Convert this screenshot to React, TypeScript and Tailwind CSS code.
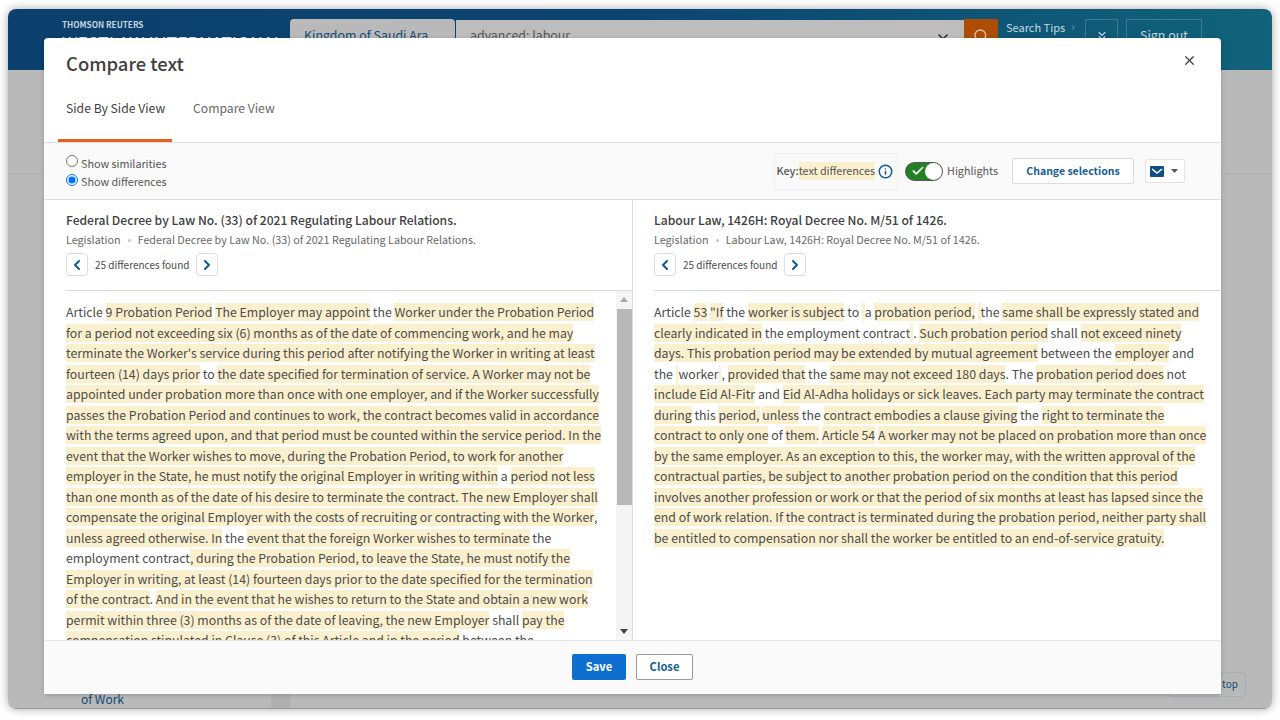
import React from 'react';
import { X, Info, Search, ChevronDown, ChevronsDown, ChevronLeft, ChevronRight, Check } from 'lucide-react';

// a string is plain text, [string] is a highlighted difference
type Seg = string | [string];

const leftLines: Seg[][] = [
  ['Article ', ['9 Probation Period'], ' ', ['The Employer may appoint'], ' the ', ['Worker under the Probation Period']],
  [['for a period not exceeding six (6) months as of the date of commencing work, and he may']],
  [["terminate the Worker's service during this period after notifying the Worker in writing at least"]],
  [['fourteen (14) days prior'], ' to ', ['the date specified for termination of service. A Worker may not be']],
  [['appointed under probation more than once with one employer, and if the Worker successfully']],
  [['passes the Probation Period and continues to work, the contract becomes valid in accordance']],
  [['with the terms agreed upon, and that period must be counted within the service period. In the']],
  [['event that the Worker wishes to move, during the Probation Period, to work for another']],
  [['employer in the State, he must notify the original Employer in writing within'], ' a ', ['period not less']],
  [['than one month as of the date of his desire to terminate the contract. The new Employer shall']],
  [['compensate the original Employer with the costs of recruiting or contracting with the Worker'], ','],
  [['unless agreed otherwise. In'], ' the ', ['event that the foreign Worker wishes to terminate'], ' the'],
  ['employment contract', [', during the Probation Period, to leave the State, he must notify the']],
  [['Employer in writing, at least (14) fourteen days prior to the date specified for the termination']],
  [['of the contract'], '. ', ['And in the event that he wishes to return to the State and obtain a new work']],
  [['permit within three (3) months as of the date of leaving, the new Employer'], ' shall ', ['pay the']],
  [['compensation stipulated in Clause (3) of this Article and in the period'], ' between the'],
];

const rightLines: Seg[][] = [
  ['Article ', ['53'], ' ', ['"If'], ' the ', ['worker is subject'], ' to ', [' '], 'a ', ['probation period,'], ' ', [' '], 'the ', ['same shall be expressly stated and']],
  [['clearly indicated in'], ' the employment contract', [' '], '. ', ['Such probation period'], ' shall ', ['not exceed ninety']],
  [['days. This probation period may be extended by mutual agreement'], ' between the ', ['employer'], ' and'],
  ['the ', [' '], 'worker', [' '], ', ', ['provided that'], ' the ', ['same may not exceed 180 days'], '. The ', ['probation period does'], ' not'],
  [['include Eid Al-Fitr'], ' and ', ['Eid Al-Adha holidays or sick leaves. Each party may terminate the contract']],
  [['during'], ' this ', ['period,'], ' ', ['unless'], ' the ', ['contract embodies a clause giving'], ' the ', ['right to terminate the']],
  [['contract to only one'], ' of ', ['them.'], ' ', ['Article 54'], ' ', ['A worker may not be placed on probation more than once']],
  [['by the same employer. As an exception to this, the worker may, with the written approval of the']],
  [['contractual parties, be subject to another probation period on the condition that this period']],
  [['involves another profession or work or that the period of six months at least has lapsed since the']],
  [['end of work relation. If the contract is terminated during the probation period, neither party shall']],
  [['be entitled to compensation nor shall the worker be entitled to an end-of-service gratuity.']],
];

const DocText = ({ lines }: { lines: Seg[][] }) => (
  <div className="text-[12.3px] leading-[20.53px] text-[#4b4b4b] whitespace-pre">
    {lines.map((line, i) => (
      <div key={i} className="h-[20.53px]">
        {line.map((seg, j) =>
          typeof seg === 'string' ? (
            <span key={j}>{seg}</span>
          ) : (
            <span key={j} className="inline-block h-[18px] leading-[18px] bg-[#fbf0cd]">{seg[0]}</span>
          )
        )}
      </div>
    ))}
  </div>
);

const DocHeader = ({ title }: { title: string }) => (
  <div className="h-[91px] shrink-0 border-b border-[#dcdcdc] pt-[11px]">
    <div className="text-[12.1px] leading-[18px] font-medium text-[#404040]">{title}</div>
    <div className="mt-[3px] flex items-center text-[10.75px] leading-[16px] text-[#686868]">
      <span>Legislation</span>
      <span className="mx-[7px] h-[3px] w-[3px] rounded-full bg-[#c4c4c4]" />
      <span>{title}</span>
    </div>
    <div className="mt-[5px] flex items-center gap-[7px] text-[10px] text-[#4b4b4b]">
      <button className="flex h-[23px] w-[22px] items-center justify-center rounded-sm border border-[#dcdcdc] bg-white text-[#0f5a94]">
        <ChevronLeft size={16} strokeWidth={3} />
      </button>
      <span>25 differences found</span>
      <button className="flex h-[23px] w-[22px] items-center justify-center rounded-sm border border-[#dcdcdc] bg-white text-[#0f5a94]">
        <ChevronRight size={16} strokeWidth={3} />
      </button>
    </div>
  </div>
);

// everything that lies dimmed behind the dialog
const Backdrop = () => (
  <div className="flex h-full flex-col border-b border-[#9a9a9a]">
    <div className="relative flex h-[61px] shrink-0 bg-gradient-to-r from-[#0b3f6c] via-[#0c4570] to-[#11627a]">
      <div className="w-[282px] shrink-0 pl-[54px] pt-[10px] text-white">
        <div className="text-[8.2px] leading-[10px] font-semibold text-[#c4d5e0]">THOMSON REUTERS</div>
        <div className="mt-[3px] text-[17.7px] leading-[20px] whitespace-nowrap text-[#d6e0e8]">WESTLAW INTERNATIONAL</div>
      </div>
      <div className="mt-[10px] h-[51px] w-[165px] shrink-0 rounded-t-sm bg-[#b9b9b9] pl-[14px] pt-[7px] text-[12.4px] text-[#0f4a78]">Kingdom of Saudi Ara</div>
      <div className="mt-[11px] flex h-[50px] w-[508px] shrink-0 ml-[1px] justify-between bg-[#bdbdbd] pl-[14px] pr-[13px] pt-[6px] text-[12.4px] text-[#555555]">
        <span>advanced: labour</span>
        <ChevronDown size={16} strokeWidth={2.5} className="mt-[3px] text-[#333333]" />
      </div>
      <div className="mt-[10px] flex h-[51px] w-[34px] shrink-0 justify-center bg-[#ae4c06] pt-[9px] text-[#dfc3ac]">
        <Search size={16} />
      </div>
      <div className="ml-[8px] mt-[10px] flex w-[71px] shrink-0 items-center gap-[5px] self-start whitespace-nowrap text-[11px] text-[#c6d8e0]">
        Search Tips
        <ChevronRight size={11} />
      </div>
      <div className="ml-[8px] mt-[10px] flex h-[40px] w-[33px] shrink-0 justify-center border border-[#3b7a92] pt-[9px] text-[#c6d8e0]">
        <ChevronsDown size={14} />
      </div>
      <div className="ml-[8px] mt-[10px] h-[40px] w-[76px] shrink-0 border border-[#3b7a92] pt-[6px] text-center text-[12.4px] text-[#c6d8e0]">Sign out</div>
    </div>
    <div className="flex min-h-0 flex-1 bg-[#b9b9b9]">
      <div className="flex w-[263px] shrink-0 flex-col pl-[73px] text-[12px] leading-[16px] text-[#0f4a78]">
        <div className="-ml-[73px] mt-[103px] border-t border-[#b0b0b0]" />
        <div className="mt-auto pb-[1px]">of Work</div>
      </div>
      <div className="w-[19px] shrink-0 bg-[#b0b0b0]" />
      <div className="flex flex-1 flex-col">
        <div className="mt-[103px] border-t border-[#b0b0b0]" />
        <div className="mt-auto mb-[11px] mr-[26px] h-[25px] w-[79px] self-end rounded-sm border border-[#a5afb8] pr-[7px] pt-[4px] text-right text-[10px] leading-[14px] text-[#0f4a78]">Back to top</div>
      </div>
    </div>
  </div>
);

export default function App() {
  return (
    <div className="h-[720px] w-[1280px] overflow-hidden bg-white pl-[8px] pr-[8px] pt-[9px] font-['Noto_Sans_CJK_SC','Source_Sans_Pro',sans-serif]">
      <div className="relative h-[700px] w-[1264px] overflow-hidden rounded-lg shadow-[0_0_10px_rgba(0,0,0,0.35)]">
        <Backdrop />

        {/* dialog */}
        <div className="absolute left-[36px] top-[29px] flex h-[656px] w-[1177px] flex-col rounded-sm bg-white shadow-[0_1px_4px_rgba(0,0,0,0.2)]">
          <div className="relative h-[105px] shrink-0 border-b border-[#dedede]">
            <h1 className="pl-[22px] pt-[11px] text-[18.4px] leading-[28px] font-medium text-[#404040]">Compare text</h1>
            <X size={15} className="absolute right-[24px] top-[15px] text-[#404040]" />
            <div className="mt-[21px] flex whitespace-nowrap text-[12.2px] leading-[20px]">
              <div className="relative ml-[14px] h-[44px] w-[114px] pl-[8px] text-[#404040]">
                Side By Side View
                <div className="absolute bottom-0 left-0 h-[3px] w-full bg-[#e4601c]" />
              </div>
              <div className="ml-[21px] text-[#686868]">Compare View</div>
            </div>
          </div>

          {/* toolbar */}
          <div className="flex h-[57px] shrink-0 items-center justify-between border-b border-[#dedede] bg-[#fafafa] pl-[22px] pr-[36px] text-[10.75px] text-[#555555]">
            <div className="flex flex-col pt-[2px] leading-[16px]">
              <label className="flex items-start gap-[3px]">
                <input type="radio" name="mode" className="m-0 mt-[1px] h-[12px] w-[12px]" />
                <span className="mt-[2px]">Show similarities</span>
              </label>
              <label className="flex items-start gap-[3px]">
                <input type="radio" name="mode" defaultChecked className="m-0 mt-[2px] h-[12px] w-[12px]" />
                <span className="mt-[2px]">Show differences</span>
              </label>
            </div>
            <div className="flex items-center">
              <div className="flex h-[37px] items-center border border-[#f0f0f0] pl-[1px] pr-[4px]">
                <span className="font-medium">Key:</span>
                <span className="bg-[#fbf0cd] leading-[18px]">text differences</span>
                <Info size={15} strokeWidth={2.4} className="ml-[3px] text-[#0f5a94]" />
              </div>
              <div className="ml-[7px] flex h-[19px] w-[38px] items-center justify-between rounded-full border border-[#555555] bg-[#228122] pl-[5px] pr-[0px]">
                <Check size={14} strokeWidth={3} className="text-white" />
                <span className="h-[17px] w-[17px] rounded-full bg-white" />
              </div>
              <span className="ml-[4px]">Highlights</span>
              <button className="ml-[14px] h-[26px] w-[122px] rounded-[2px] border border-[#dcdcdc] bg-white text-[10.5px] font-semibold text-[#135c94]">Change selections</button>
              <div className="ml-[11px] flex h-[24px] w-[40px] items-center gap-[7px] rounded-[2px] border border-[#e4e4e4] bg-white pl-[4px]">
                <svg width="14" height="11" viewBox="0 0 14 11">
                  <rect width="14" height="11" rx="1" fill="#0f4f86" />
                  <path d="M2 3 L7 7 L12 3" fill="none" stroke="#ffffff" strokeWidth="1.6" />
                </svg>
                <svg width="7" height="4" viewBox="0 0 7 4"><path d="M0 0 H7 L3.5 4 Z" fill="#555555" /></svg>
              </div>
            </div>
          </div>

          {/* the two documents */}
          <div className="flex min-h-0 flex-1">
            <div className="flex w-[589px] shrink-0 flex-col border-r border-[#dcdcdc]">
              <div className="pl-[22px]"><DocHeader title="Federal Decree by Law No. (33) of 2021 Regulating Labour Relations." /></div>
              <div className="relative min-h-0 flex-1 overflow-hidden pl-[22px] pt-[11px]">
                <DocText lines={leftLines} />
                <div className="absolute bottom-0 right-0 top-0 w-[16px] bg-[#f4f4f4]">
                  <div className="absolute left-[4px] top-[6px] h-0 w-0 border-x-[4px] border-b-[5px] border-x-transparent border-b-[#a8a8a8]" />
                  <div className="absolute left-[1px] top-[18px] h-[196px] w-[15px] bg-[#b8b8b8]" />
                  <div className="absolute bottom-[6px] left-[4px] h-0 w-0 border-x-[4px] border-t-[5px] border-x-transparent border-t-[#444444]" />
                </div>
              </div>
            </div>
            <div className="flex flex-1 flex-col">
              <div className="pl-[21px]"><DocHeader title="Labour Law, 1426H: Royal Decree No. M/51 of 1426." /></div>
              <div className="min-h-0 flex-1 overflow-hidden pl-[21px] pt-[11px]">
                <DocText lines={rightLines} />
              </div>
            </div>
          </div>

          {/* footer */}
          <div className="flex h-[54px] shrink-0 items-center justify-center gap-[10px] border-t border-[#e4e4e4] bg-[#fafafa] pb-[2px] text-[11.2px] font-semibold">
            <button className="h-[26px] w-[54px] rounded-[2px] bg-[#0f6fd0] text-white">Save</button>
            <button className="h-[26px] w-[57px] rounded-[2px] border border-[#9a9a9a] bg-white text-[#135c94]">Close</button>
          </div>
        </div>
      </div>
    </div>
  );
}
